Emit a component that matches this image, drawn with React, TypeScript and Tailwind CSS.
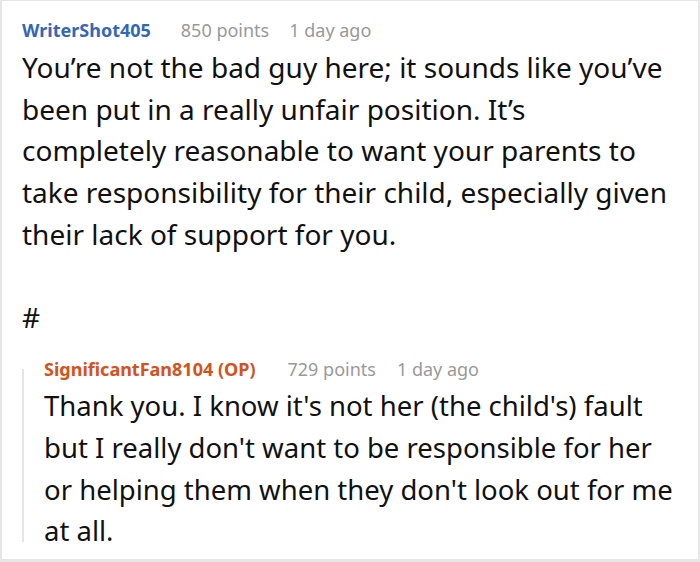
export default function App() {
  return (
    <div className="w-[700px] h-[562px] overflow-hidden bg-white border-t border-x-2 border-b-[3px] border-[#e6e6e6] pl-[20px] pr-[16px] pt-[17px] font-['Noto_Sans',sans-serif]">
      {/* first comment */}
      <div className="flex items-baseline text-[18px] leading-[24px]">
        <span className="font-bold text-[#3467b8]">WriterShot405</span>
        <span className="ml-[30px] text-[#999999]">850 points</span>
        <span className="ml-[20px] text-[#999999]">1 day ago</span>
      </div>
      <p className="mt-[5px] pr-[12px] text-[28px] leading-[41.7px] text-[#111111]">
        You’re not the bad guy here; it sounds like you’ve been put in a really unfair position. It’s completely reasonable to want your parents to take responsibility for their child, especially given their lack of support for you.
      </p>

      <p className="mt-[41px] text-[28px] leading-[41.7px] text-[#111111]">#</p>

      {/* reply */}
      <div className="relative mt-[19px] pl-[22px] before:absolute before:left-0 before:top-[12px] before:bottom-[10px] before:w-[2px] before:bg-[#e6e6e6]">
        <div className="flex items-baseline text-[18px] leading-[24px]">
          <span className="font-bold text-[#d4521c]">SignificantFan8104 (OP)</span>
          <span className="ml-[32px] text-[#999999]">729 points</span>
          <span className="ml-[21px] text-[#999999]">1 day ago</span>
        </div>
        <p className="mt-[4px] text-[27.5px] leading-[41.7px] text-[#111111]">
          Thank you. I know it's not her (the child's) fault but I really don't want to be responsible for her or helping them when they don't look out for me at all.
        </p>
      </div>
    </div>
  );
}
